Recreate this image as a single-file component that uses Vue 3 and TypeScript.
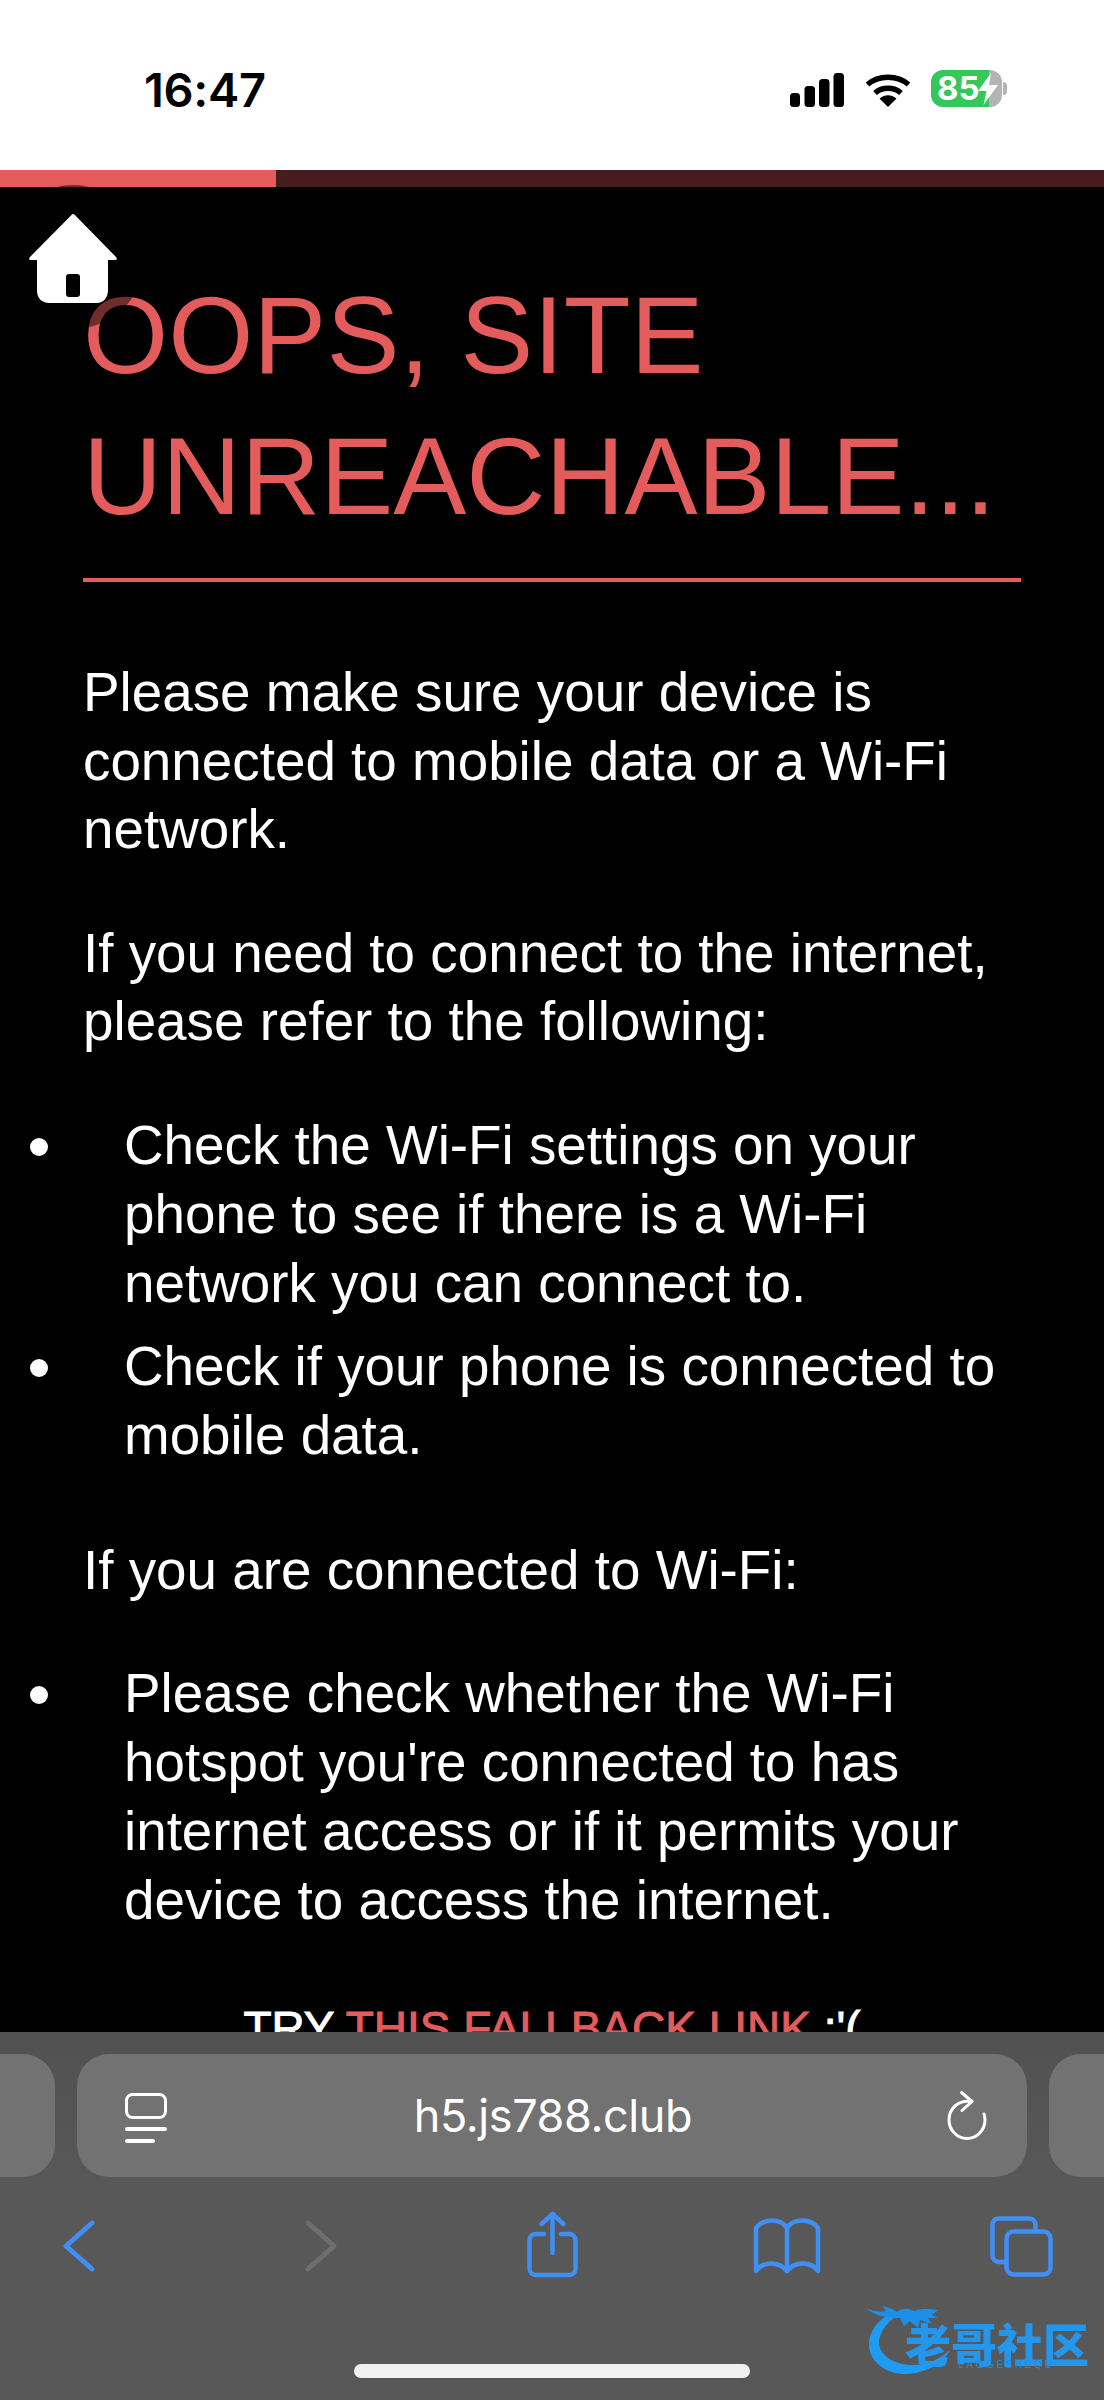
<script setup lang="ts">
const list1: string[] = [
  'Check the Wi-Fi settings on your phone to see if there is a Wi-Fi network you can connect to.',
  'Check if your phone is connected to mobile data.',
]
const list2: string[] = [
  "Please check whether the Wi-Fi hotspot you're connected to has internet access or if it permits your device to access the internet.",
]
</script>

<template>
  <div class="screen">
    <header class="status">
      <span class="time">16:47</span>
      <div class="status-icons">
        <svg class="signal" width="54" height="34" viewBox="0 0 54 34">
          <rect x="0" y="20" width="10" height="14" rx="3.5" />
          <rect x="14.500" y="13" width="10.500" height="21" rx="3.500" />
          <rect x="29" y="6" width="10.500" height="28" rx="3.500" />
          <rect x="43.500" y="0" width="10.500" height="34" rx="3.500" />
        </svg>
        <svg class="wifi" width="46" height="34" viewBox="0 0 46 34">
          <path d="M2.500 11.500C13.500 1.800 32.500 1.800 43.500 11.500" fill="none" stroke="#000" stroke-width="5.500" />
          <path d="M10 20C17 13.800 29 13.800 36 20" fill="none" stroke="#000" stroke-width="5.500" />
          <path d="M14.500 25.500C19.500 21 26.500 21 31.500 25.500L23 34Z" fill="#000" />
        </svg>
        <div class="battery">
          <span class="battery-num">85</span>
          <svg class="bolt" width="22" height="32" viewBox="0 0 22 32">
            <path d="M14 0L1 18H9.500L6.500 32L21 12H12Z" fill="#fff" />
          </svg>
        </div>
        <span class="nub"></span>
      </div>
    </header>

    <div class="progress"><div class="progress-fill"></div></div>

    <main class="page">
      <h1 class="title">OOPS, SITE UNREACHABLE...</h1>
      <hr class="rule" />
      <p class="para first">Please make sure your device is connected to mobile data or a Wi-Fi network.</p>
      <p class="para second">If you need to connect to the internet, please refer to the following:</p>
      <ul class="list">
        <li v-for="item in list1" :key="item">{{ item }}</li>
      </ul>
      <p class="para third">If you are connected to Wi-Fi:</p>
      <ul class="list">
        <li v-for="item in list2" :key="item">{{ item }}</li>
      </ul>
      <p class="fallback">TRY <a class="link">THIS FALLBACK LINK</a> :'(</p>
    </main>

    <div class="home-shade"></div>
    <svg class="home" width="90" height="92" viewBox="0 0 90 92">
      <path d="M44 1.500C44.800 .8 45.600 .8 46.400 1.500L88 44C89.500 45.600 88.800 47 87 47H80V77C80 84 76 90 69 90H21C14 90 9 85 9 78V47H3C1 47 .4 45.600 2 44Z" fill="#fff" />
      <rect x="38" y="61" width="14" height="23" rx="3" fill="#000" />
    </svg>

    <footer class="browser">
      <div class="url-row">
        <div class="pill side left"></div>
        <div class="pill url">
          <svg class="tab-icon" width="42" height="50" viewBox="0 0 42 50">
            <rect x="1.500" y="1.500" width="39" height="23" rx="6" fill="none" stroke="#fff" stroke-width="3" />
            <rect x="0" y="34" width="42" height="4" rx="2" fill="#fff" />
            <rect x="0" y="46" width="30" height="4" rx="2" fill="#fff" />
          </svg>
          <span class="host">h5.js788.club</span>
          <svg class="reload" width="40" height="50" viewBox="0 0 40 50">
            <path d="M24 10.500C12 8.500 2 17 2 29C2 39 10 47.500 20 47.500C30 47.500 38 39 38 29C38 27 37.700 25 37 23" fill="none" stroke="#fff" stroke-width="3" stroke-linecap="round" />
            <path d="M14.500 1.500L25 10.500L15 19.500" fill="none" stroke="#fff" stroke-width="3" stroke-linecap="round" stroke-linejoin="round" />
          </svg>
        </div>
        <div class="pill side right"></div>
      </div>

      <nav class="toolbar">
        <svg width="80" height="80" viewBox="0 0 80 80" class="tool">
          <path d="M53 17L27 40L53 63" />
        </svg>
        <svg width="80" height="80" viewBox="0 0 80 80" class="tool off">
          <path d="M27 17L53 40L27 63" />
        </svg>
        <svg width="80" height="80" viewBox="0 0 80 80" class="tool thin">
          <path d="M32 28H24C20 28 17.500 30.500 17.500 34.500V62.500C17.500 66.500 20 69 24 69H57C61 69 63.500 66.500 63.500 62.500V34.500C63.500 30.500 61 28 57 28H49" />
          <path d="M40.500 8V47" />
          <path d="M29.500 18L40.500 8L51.500 18" />
        </svg>
        <svg width="80" height="80" viewBox="0 0 80 80" class="tool thin">
          <path d="M40 22C34 12 16 12 9 22V65C16 55 32 55 40 65C48 55 64 55 71 65V22C64 12 46 12 40 22Z" />
          <path d="M40 22V65" />
        </svg>
        <svg width="80" height="80" viewBox="0 0 80 80" class="tool thin">
          <path d="M24 56H18C14 56 11.500 53.500 11.500 49.500V19C11.500 15 14 12.500 18 12.500H48C52 12.500 54.500 15 54.500 19V25" />
          <rect x="25.500" y="25.500" width="44" height="43" rx="7" />
        </svg>
      </nav>

      <div class="indicator"></div>
    </footer>

    <div class="watermark">
      <svg class="dragon" width="90" height="76" viewBox="0 0 90 76">
        <path d="M20 12C8 20 2 32 3 43C5 61 26 74 50 69C66 65 78 58 84 46C74 55 60 62 44 61C26 60 12 50 13 37C14 28 20 20 28 14Z" fill="#1f9cf2" />
        <path d="M0 4C8 8 14 8 20 7L16 2C22 3 27 5 31 8C36 4 42 4 48 7C56 4 64 5 72 6L66 11L72 14L62 14L66 20L54 16L52 24L44 17L38 22L34 14C22 14 8 12 0 4Z" fill="#1c8fe8" />
      </svg>
      <div class="wm-cn">老哥社区</div>
      <div class="wm-en">LAOGESHEQU</div>
    </div>
  </div>
</template>

<style scoped>
.screen {
  position: relative;
  display: flex;
  flex-direction: column;
  width: 1104px;
  height: 2400px;
  overflow: hidden;
  background: #000;
  font-family: "Liberation Sans", Arial, sans-serif;
}
.status {
  position: relative;
  display: flex;
  align-items: flex-start;
  justify-content: space-between;
  flex: none;
  height: 170px;
  padding: 70px 97px 0 144px;
  box-sizing: border-box;
  background: #fff;
}
.time {
  font-family: Inter, "Liberation Sans", sans-serif;
  font-size: 47px;
  font-weight: 600;
  line-height: 40px;
  color: #000;
  letter-spacing: -0.3px;
}
.status-icons {
  display: flex;
  align-items: flex-start;
}
.signal {
  margin-top: 3px;
  margin-right: 21px;
}
.signal rect {
  fill: #000;
}
.wifi {
  margin-top: 3px;
  margin-right: 20px;
}
.battery {
  position: relative;
  display: flex;
  align-items: center;
  width: 71px;
  height: 37px;
  border-radius: 12px;
  background: linear-gradient(90deg, #34c759 0, #34c759 58px, #b4b4b4 58px);
}
.battery-num {
  margin-left: 6px;
  font-family: Inter, "Liberation Sans", sans-serif;
  font-size: 33px;
  font-weight: 700;
  line-height: 37px;
  color: #fff;
}
.bolt {
  position: absolute;
  left: 46px;
  top: 3px;
}
.nub {
  flex: none;
  align-self: center;
  width: 4px;
  height: 13px;
  margin-left: 1px;
  border-radius: 0 4px 4px 0;
  background: #b4b4b4;
}
.progress {
  flex: none;
  height: 17px;
  background: #461c1c;
}
.progress-fill {
  width: 276px;
  height: 100%;
  background: #e35b5b;
}
.page {
  flex: 1;
  min-height: 0;
  overflow: hidden;
  padding: 78px 83px 0 83px;
  color: #fff;
}
.title {
  margin: 0;
  font-size: 109.500px;
  font-weight: 400;
  line-height: 140.500px;
  color: #e35b5b;
}
.rule {
  height: 4px;
  margin: 32px 0 0;
  border: 0;
  background: #e35b5b;
}
.para {
  margin: 0;
  font-size: 54.800px;
  line-height: 68.5px;
}
.first {
  margin-top: 76px;
}
.second {
  margin-top: 55px;
}
.third {
  margin-top: 66px;
}
.list {
  margin: 55px 0 0 -83px;
  padding: 0;
  list-style: none;
}
.list li {
  position: relative;
  padding-left: 124px;
  font-size: 54.800px;
  line-height: 69px;
}
.list li + li {
  margin-top: 14px;
}
.list li::before {
  content: "";
  position: absolute;
  left: 30px;
  top: 27px;
  width: 18px;
  height: 18px;
  border-radius: 50%;
  background: #fff;
}
.fallback {
  margin: 63px -83px 0;
  text-align: center;
  font-size: 46px;
  line-height: 60px;
  -webkit-text-stroke: 1px currentColor;
}
.link {
  color: #e35b5b;
}
.home-shade {
  position: absolute;
  left: 1px;
  top: 185px;
  width: 144px;
  height: 144px;
  border-radius: 50%;
  background: rgba(0, 0, 0, 0.5);
}
.home {
  position: absolute;
  left: 28px;
  top: 213px;
}
.browser {
  flex: none;
  height: 368px;
  background: linear-gradient(180deg, #515151 0, #585858 150px, #585858 100%);
}
.url-row {
  display: flex;
  gap: 22px;
  height: 123px;
  padding-top: 22px;
}
.pill {
  background: #727272;
  border-radius: 32px;
}
.side {
  flex: 1;
}
.left {
  margin-left: -40px;
}
.right {
  margin-right: -40px;
}
.url {
  display: flex;
  align-items: center;
  justify-content: space-between;
  flex: none;
  width: 950px;
  padding: 0 40px 0 48px;
  box-sizing: border-box;
}
.tab-icon {
  flex: none;
  margin-top: 4px;
}
.host {
  margin-left: -8px;
  font-family: Inter, "Liberation Sans", sans-serif;
  font-size: 45px;
  line-height: 60px;
  color: #fff;
  letter-spacing: -0.4px;
}
.reload {
  flex: none;
}
.toolbar {
  display: grid;
  grid-template-columns: 242px 231px 235px 234px 80px;
  margin-top: 29px;
  padding-left: 39px;
}
.tool {
  fill: none;
  stroke: #3f8ff5;
  stroke-width: 5;
  stroke-linecap: round;
  stroke-linejoin: round;
}
.tool.off {
  stroke: #6e6e6e;
}
.tool.thin {
  stroke-width: 4.500;
}
.indicator {
  width: 396px;
  height: 14px;
  margin: 78px auto 0;
  border-radius: 7px;
  background: #f0f0f0;
}
.watermark {
  position: absolute;
  left: 866px;
  top: 2304px;
  width: 230px;
  height: 80px;
  filter: blur(0.7px);
}
.dragon {
  position: absolute;
  left: 0;
  top: 0;
}
.wm-cn {
  position: absolute;
  left: 39px;
  top: 22px;
  font-family: "Noto Sans CJK SC", sans-serif;
  font-size: 46px;
  font-weight: 900;
  line-height: 33px;
  white-space: nowrap;
  color: #2496ec;
}
.wm-en {
  position: absolute;
  left: 92px;
  top: 56px;
  font-size: 10px;
  line-height: 10px;
  letter-spacing: 2.600px;
  white-space: nowrap;
  color: #2b8ad6;
}
</style>
